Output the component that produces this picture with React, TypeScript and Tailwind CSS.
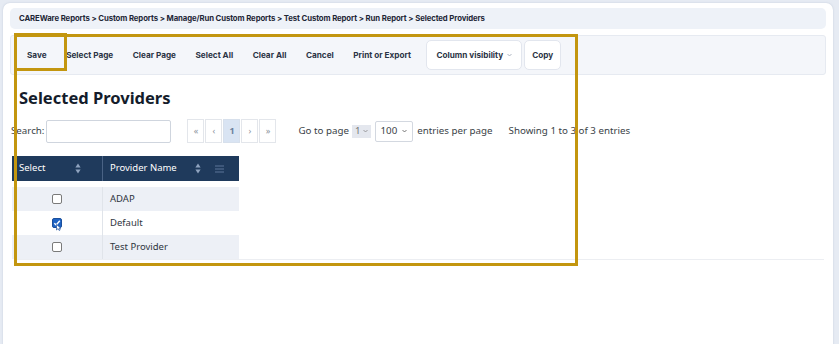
import React from "react";

const rows = [
  { name: "ADAP", checked: false },
  { name: "Default", checked: true },
  { name: "Test Provider", checked: false },
];

function SortIcon() {
  return (
    <svg width="6" height="11" viewBox="0 0 6 11" className="shrink-0">
      <path d="M3 0.5 L5.6 4.6 H0.4 Z" fill="#8fa3bf" />
      <path d="M3 10.5 L5.6 6.4 H0.4 Z" fill="#8fa3bf" />
    </svg>
  );
}

function MenuIcon() {
  return (
    <svg width="9" height="8" viewBox="0 0 9 8" className="shrink-0">
      <rect x="0" y="0.5" width="9" height="1" fill="#5d7597" />
      <rect x="0" y="3.5" width="9" height="1" fill="#5d7597" />
      <rect x="0" y="6.5" width="9" height="1" fill="#5d7597" />
    </svg>
  );
}

function Checkbox({ checked }: { checked: boolean }) {
  if (checked) {
    return (
      <div className="relative">
        <div className="w-[10px] h-[10px] rounded-[2px] bg-[#1e63c4] border border-[#1a4f9c] flex items-center justify-center">
          <svg width="8" height="8" viewBox="0 0 8 8">
            <path d="M1.3 4.2 L3.2 6 L6.8 1.8" stroke="white" strokeWidth="1.4" fill="none" />
          </svg>
        </div>
        <svg width="6" height="7" viewBox="0 0 6 7" className="absolute left-[4px] top-[6px]">
          <path d="M0.5 0.5 L0.5 6 L2 4.6 L3.2 6.5 L4.2 6 L3 4.2 L5 4.2 Z" fill="white" stroke="#1a4f9c" strokeWidth="0.7" />
        </svg>
      </div>
    );
  }
  return <div className="w-[10px] h-[10px] rounded-[2px] bg-white border border-[#7a7a7a]" />;
}

export default function App() {
  const toolbar = ["Save", "Select Page", "Clear Page", "Select All", "Clear All", "Cancel", "Print or Export"];
  return (
    <div className="w-[839px] h-[344px] bg-[#e6ebf3] pl-[3px] pt-[3px] pr-[6px] overflow-hidden font-['Open_Sans',sans-serif]">
      <div className="relative h-[360px] bg-white rounded-t-[7px] shadow-[0_0_2px_rgba(120,140,170,0.35)] px-[7px] pt-[5px]">
        {/* Breadcrumb */}
        <div className="h-[21px] bg-[#eef2f8] rounded-[5px] flex items-center pl-[9px] text-[7.75px] font-bold text-[#1d2636] font-['Inter',sans-serif] tracking-[-0.1px]">
          CAREWare Reports &gt; Custom Reports &gt; Manage/Run Custom Reports &gt; Test Custom Report &gt; Run Report &gt; Selected Providers
        </div>

        {/* Toolbar */}
        <div className="mt-[6px] h-[40px] bg-[#f4f6fa] border border-[#e6eaf1] rounded-[3px] flex items-center pl-[16px] text-[8.2px] font-bold text-[#2b3445] font-['Inter',sans-serif]">
          {toolbar.map((t) => (
            <span key={t} className="mr-[19.5px]">
              {t}
            </span>
          ))}
          <div className="-ml-[4px] h-[30px] px-[9px] bg-white border border-[#e2e6ee] rounded-[5px] flex items-center gap-[4px]">
            Column visibility
            <svg width="5" height="4" viewBox="0 0 5 4">
              <path d="M0.5 1 L2.5 3 L4.5 1" stroke="#9aa3b2" strokeWidth="0.8" fill="none" />
            </svg>
          </div>
          <div className="ml-[2px] h-[30px] px-[7px] bg-white border border-[#e2e6ee] rounded-[5px] flex items-center">Copy</div>
        </div>

        {/* Title */}
        <h1 className="mt-[13px] ml-[9px] text-[16.5px] font-bold text-[#141c2b] font-['Noto_Sans',sans-serif] leading-[20px]">
          Selected Providers
        </h1>

        {/* Search + paging */}
        <div className="mt-[11px] flex items-center text-[9.75px] text-[#3a3f47] font-['Noto_Sans',sans-serif]">
          <span className="ml-[1px]">Search:</span>
          <div className="ml-[2px] w-[125px] h-[23px] border border-[#cfd5de] rounded-[2px] bg-white" />
          <div className="ml-[16px] flex gap-[1px]">
            {["«", "‹", "1", "›", "»"].map((p) => (
              <div
                key={p}
                className={
                  p === "1"
                    ? "w-[17px] h-[24px] flex items-center justify-center border border-[#d7e0ec] bg-[#d9e4f3] text-[#6c7f9b] font-bold text-[9px]"
                    : "w-[17px] h-[24px] flex items-center justify-center border border-[#e3e6eb] bg-white text-[#8c939d] text-[9px]"
                }
              >
                {p}
              </div>
            ))}
          </div>
          <span className="ml-[22px]">Go to page</span>
          <div className="ml-[3px] h-[13px] px-[3px] bg-[#e4e7ee] flex items-center gap-[2px] text-[#777]">
            1
            <svg width="5" height="4" viewBox="0 0 5 4">
              <path d="M0.5 1 L2.5 3 L4.5 1" stroke="#888" strokeWidth="0.8" fill="none" />
            </svg>
          </div>
          <div className="ml-[4px] h-[21px] px-[5px] bg-white border border-[#d3d8e0] rounded-[2px] flex items-center gap-[5px]">
            100
            <svg width="5" height="4" viewBox="0 0 5 4">
              <path d="M0.5 1 L2.5 3 L4.5 1" stroke="#555" strokeWidth="0.8" fill="none" />
            </svg>
          </div>
          <span className="ml-[4px]">entries per page</span>
          <span className="ml-[16px]">Showing 1 to 3 of 3 entries</span>
        </div>

        {/* Table */}
        <div className="mt-[13px] ml-[2px] w-[227px] text-[9.5px] font-['Noto_Sans',sans-serif]">
          <div className="flex h-[25px] bg-[#1f3a5c] text-white">
            <div className="w-[91px] flex items-center justify-between pl-[7px] pr-[21px] border-r border-[#4a6385]">
              Select
              <SortIcon />
            </div>
            <div className="flex-1 flex items-center pl-[7px] pr-[15px]">
              <span className="flex-1">Provider Name</span>
              <SortIcon />
              <span className="ml-[14px]">
                <MenuIcon />
              </span>
            </div>
          </div>
          <div className="h-[6px]" />
          {rows.map((r, i) => (
            <div key={r.name} className={`flex h-[24px] text-[#2f3540] ${i % 2 === 0 ? "bg-[#edf0f6]" : "bg-white"}`}>
              <div className="w-[91px] flex items-center justify-center border-r border-[#e0e4ea]">
                <Checkbox checked={r.checked} />
              </div>
              <div className="flex-1 flex items-center pl-[7px]">{r.name}</div>
            </div>
          ))}
        </div>

        <div className="ml-[5px] mr-[2px] h-[1px] bg-[#eceef2]" />

        {/* Highlight annotations */}
        <div className="absolute left-[11px] top-[31px] w-[564px] h-[232px] border-[3px] border-[#c3960f] pointer-events-none" />
        <div className="absolute left-[11px] top-[30px] w-[53px] h-[38px] border-[3px] border-[#c3960f] pointer-events-none" />
      </div>
    </div>
  );
}
